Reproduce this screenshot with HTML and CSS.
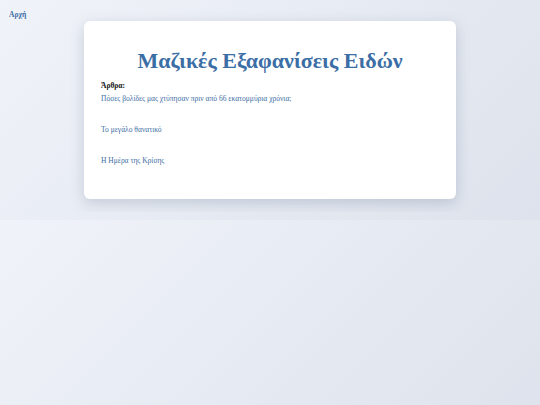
FILE: index.html
```html
<!DOCTYPE html>
<html lang="el">
<head>
<meta charset="utf-8">
<title>Μαζικές Εξαφανίσεις Ειδών</title>
<link rel="stylesheet" href="styles.css">
</head>
<body>
<nav class="topnav"><a class="home" href="#">Αρχή</a></nav>
<main class="card">
  <h1 class="title">Μαζικές Εξαφανίσεις Ειδών</h1>
  <p class="label">Άρθρα:</p>
  <ul class="articles">
    <li><a href="#">Πόσες βολίδες μας χτύπησαν πριν από 66 εκατομμύρια χρόνια;</a></li>
    <li><a href="#">Το μεγάλο θανατικό</a></li>
    <li><a href="#">Η Ημέρα της Κρίσης</a></li>
  </ul>
</main>
</body>
</html>
```
FILE: styles.css
```css
body {
  margin: 8px;
  font-family: "Liberation Serif", "DejaVu Serif", serif;
  background: linear-gradient(135deg, #f0f3f9 0%, #dde2ec 100%);
  color: #222;
}
.topnav {
  height: 10px;
  line-height: 8px;
  padding-left: 1px;
}
.home {
  font-size: 7.5px;
  font-weight: bold;
  color: #3e6ea3;
  text-decoration: none;
}
.card {
  width: 338px;
  margin: 3px auto 13px;
  padding: 21px 17px 33px;
  background: #fff;
  border-radius: 6px;
  box-shadow: 0 4px 14px rgba(90, 105, 135, 0.26);
}
.title {
  margin: 7px 0 8px;
  text-align: center;
  font-size: 22px;
  line-height: 24px;
  font-weight: bold;
  color: #3b6ea5;
}
.label {
  margin: 0 0 3px;
  font-size: 7.5px;
  line-height: 10px;
  font-weight: bold;
  color: #111;
}
.articles {
  list-style: none;
  margin: 0;
  padding: 0;
}
.articles li {
  font-size: 7.5px;
  line-height: 10px;
  margin-bottom: 21px;
}
.articles li:last-child {
  margin-bottom: 0;
}
.articles a {
  color: #3e6ea3;
  text-decoration: none;
}
```
